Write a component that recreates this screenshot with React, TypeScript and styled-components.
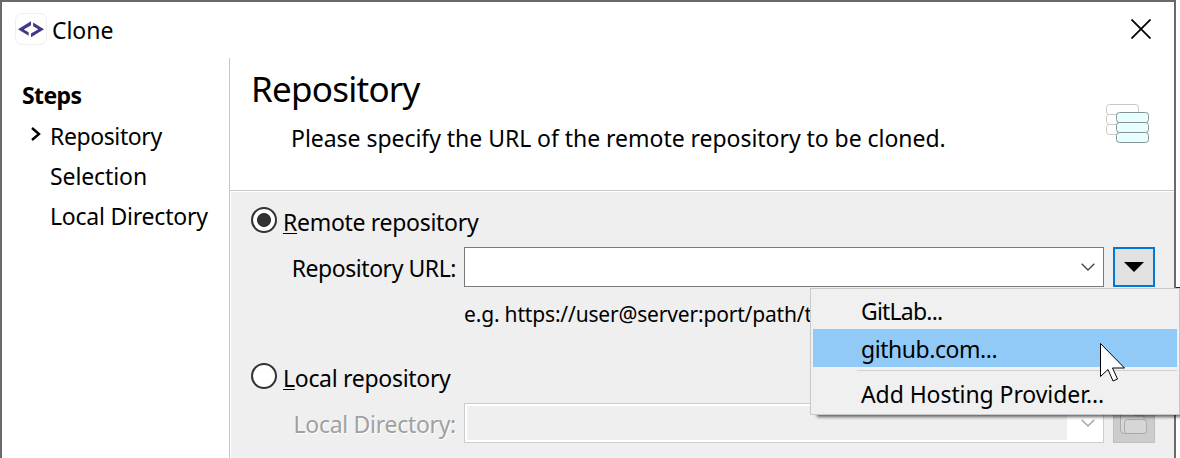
import React from "react";
import styled, { createGlobalStyle } from "styled-components";

const GlobalStyle = createGlobalStyle`
  *, *::before, *::after { box-sizing: border-box; }
  body {
    margin: 0;
    background: #fff;
    overflow: hidden;
    font-family: "Noto Sans", "Open Sans", sans-serif;
    color: #000;
  }
`;

const Screen = styled.div`
  width: 1180px;
  height: 458px;
  position: relative;
  overflow: hidden;
  display: flex;
`;

const Backdrop = styled.div`
  flex: 1;
  height: 288px;
  background: #fff;
  border-bottom: 1px solid #2b2410;
`;

const Dialog = styled.div`
  width: 1176px;
  height: 458px;
  flex: none;
  background: #fff;
  border: 2px solid #6a6a6a;
  border-bottom: 0;
  display: flex;
  flex-direction: column;
`;

const TitleBar = styled.div`
  height: 56px;
  flex: none;
  display: flex;
  align-items: center;
  padding: 0 23px 2px 13px;
`;

const AppIcon = styled.div`
  width: 32px;
  height: 32px;
  border: 1px solid #efefef;
  border-radius: 7px;
  display: flex;
  align-items: center;
  justify-content: center;
  svg { display: block; }
`;

const Text = styled.span<{ $size?: number; $ls?: number; $bold?: boolean; $line?: number }>`
  font-size: ${(p) => p.$size ?? 23}px;
  letter-spacing: ${(p) => p.$ls ?? -0.3}px;
  font-weight: ${(p) => (p.$bold ? 700 : 400)};
  line-height: ${(p) => p.$line ?? 32}px;
  white-space: pre;
`;

const Mnemonic = styled.span`
  text-decoration: underline;
  text-decoration-thickness: 1px;
  text-underline-offset: 2px;
`;

const DialogTitle = styled(Text)`
  margin: 1px auto 0 5px;
`;

const Body = styled.div`
  flex: 1;
  display: flex;
`;

const Sidebar = styled.div`
  width: 228px;
  border-right: 1px solid #c8c8c8;
  flex: none;
  padding: 18px 0 0 20px;
  display: flex;
  flex-direction: column;
`;

const Step = styled.div`
  height: 40px;
  padding-left: 28px;
  display: flex;
  align-items: center;
  &:first-child { padding: 0 0 2px; }
`;

const StepMarker = styled.svg`
  flex: none;
  margin: -4px 8px 0 -19px;
`;

const Main = styled.div`
  flex: 1;
  display: flex;
  flex-direction: column;
`;

const Header = styled.div`
  height: 133px;
  border-bottom: 1px solid #c8c8c8;
  display: flex;
  justify-content: space-between;
  padding: 7px 25px 0 21px;
`;

const Heading = styled.div`
  display: flex;
  flex-direction: column;
`;

const Description = styled(Text)`
  margin: 9px 0 0 40px;
`;

const HeaderIcon = styled.svg`
  margin-top: 39px;
`;

const Form = styled.div`
  flex: 1;
  background: #efefef;
  margin-top: 1px;
  margin-left: 1px;
  padding: 14px 19px 0 20px;
  display: flex;
  flex-direction: column;
`;

const RadioRow = styled.div`
  height: 32px;
  flex: none;
  display: flex;
  align-items: center;
  gap: 6px;
`;

const Radio = styled.span<{ $checked?: boolean }>`
  width: 26px;
  height: 26px;
  margin-top: -4px;
  border: 2px solid #333;
  border-radius: 50%;
  background: ${(p) => (p.$checked ? "radial-gradient(circle, #333 6.6px, #fff 7.3px)" : "#fff")};
`;

const FieldRow = styled.div`
  display: flex;
  flex: none;
  height: 40px;
  margin-top: 9px;
`;

const FieldLabel = styled(Text)<{ $disabled?: boolean }>`
  width: 205px;
  margin-right: 8px;
  padding-top: 5px;
  text-align: right;
  color: ${(p) => (p.$disabled ? "#a0a0a0" : "#000")};
  text-shadow: ${(p) => (p.$disabled ? "1px 1px 0 #fff" : "none")};
`;

const Combo = styled.div<{ $disabled?: boolean }>`
  width: 640px;
  border: 1px solid ${(p) => (p.$disabled ? "#cccccc" : "#7a7a7a")};
  background: #fff;
  padding: 2px;
  display: flex;
  justify-content: space-between;
  align-items: center;
`;

const ComboValue = styled.div<{ $disabled?: boolean }>`
  width: 600px;
  height: 34px;
  background: ${(p) => (p.$disabled ? "#efefef" : "#fff")};
`;

const Chevron = styled.svg`
  margin-right: 6px;
`;

const SideButton = styled.div<{ $disabled?: boolean }>`
  width: 42px;
  margin-left: 9px;
  border: ${(p) => (p.$disabled ? "1px solid #bfbfbf" : "2px solid #0078d7")};
  background: ${(p) => (p.$disabled ? "#cccccc" : "#e1e1e1")};
  display: flex;
  align-items: center;
  justify-content: center;
`;

const Hint = styled(Text)`
  flex: none;
  width: 346px;
  margin: 11px 0 32px 213px;
`;

const Menu = styled.div`
  position: absolute;
  left: 810px;
  top: 288px;
  width: 370px;
  height: 127px;
  border: 1px solid #c8c8c8;
  background: #f0f0f0;
  box-shadow: 5px 4px 3px -2px rgba(0, 0, 0, 0.6);
  padding: 2px;
  display: flex;
  flex-direction: column;
`;

const MenuItem = styled.div<{ $active?: boolean }>`
  height: 38px;
  flex: none;
  padding: 2px 0 0 48px;
  display: flex;
  align-items: center;
  background: ${(p) => (p.$active ? "#91c9f7" : "transparent")};
`;

const Separator = styled.div`
  height: 1px;
  flex: none;
  margin: 3px 0 3px 44px;
  background: #d2d2d2;
`;

const Cursor = styled.svg`
  position: absolute;
  left: 1099px;
  top: 342px;
`;

export default function App() {
  return (
    <Screen>
      <GlobalStyle />
      <Dialog>
        <TitleBar>
          <AppIcon>
            <svg width="26" height="17" viewBox="0 0 26 17">
              <path d="M0 8.2L13 0.3v4L5.8 8.4l4.8 2.8v3.6z" fill="#3e3a86" />
              <path d="M26 8.2L13 16.2v-3.8l7.3-4.1-5.2-3.1V1.6z" fill="#3e3a86" />
            </svg>
          </AppIcon>
          <DialogTitle $ls={-0.05}>Clone</DialogTitle>
          <svg width="20" height="20" viewBox="0 0 20 20">
            <path d="M0.5 0.5l19 19M19.5 0.5l-19 19" stroke="#000" strokeWidth="1.8" />
          </svg>
        </TitleBar>
        <Body>
          <Sidebar>
            <Step><Text $bold $ls={-0.6}>Steps</Text></Step>
            <Step>
              <StepMarker width="11" height="14" viewBox="0 0 11 14">
                <path d="M1 1l7 6-7 6" fill="none" stroke="#000" strokeWidth="2.4" />
              </StepMarker>
              <Text $ls={-0.4}>Repository</Text>
            </Step>
            <Step><Text $ls={-0.1}>Selection</Text></Step>
            <Step><Text $ls={-0.22}>Local Directory</Text></Step>
          </Sidebar>
          <Main>
            <Header>
              <Heading>
                <Text $size={35} $ls={-0.75} $line={48}>Repository</Text>
                <Description $ls={-0.04}>Please specify the URL of the remote repository to be cloned.</Description>
              </Heading>
              <HeaderIcon width="43" height="40" viewBox="0 0 43 40">
                <g fill="#fff" stroke="#c8c8c8">
                  <rect x="0.5" y="0.5" width="32" height="10" rx="3" />
                  <rect x="0.5" y="10.5" width="32" height="10" rx="3" />
                  <rect x="0.5" y="20.5" width="32" height="10" rx="3" />
                </g>
                <g fill="#e8ffff" stroke="#869292">
                  <rect x="10.5" y="8.5" width="32" height="10" rx="3" />
                  <rect x="10.5" y="18.5" width="32" height="10" rx="3" />
                  <rect x="10.5" y="28.5" width="32" height="10" rx="3" />
                </g>
              </HeaderIcon>
            </Header>
            <Form>
              <RadioRow>
                <Radio $checked />
                <Text><Mnemonic>R</Mnemonic>emote repository</Text>
              </RadioRow>
              <FieldRow>
                <FieldLabel $ls={-0.45}>Repository URL:</FieldLabel>
                <Combo>
                  <ComboValue />
                  <Chevron width="14" height="8" viewBox="0 0 14 8">
                    <path d="M0.7 0.7L7 7l6.3-6.3" fill="none" stroke="#444" strokeWidth="1.3" />
                  </Chevron>
                </Combo>
                <SideButton>
                  <svg width="20" height="10" viewBox="0 0 20 10"><path d="M0 0h20L10 10z" /></svg>
                </SideButton>
              </FieldRow>
              <Hint $size={21} $ls={-0.17}>e.g. https://user@server:port/path/t</Hint>
              <RadioRow>
                <Radio />
                <Text><Mnemonic>L</Mnemonic>ocal repository</Text>
              </RadioRow>
              <FieldRow>
                <FieldLabel $disabled>Local Directory:</FieldLabel>
                <Combo $disabled>
                  <ComboValue $disabled />
                  <Chevron width="14" height="8" viewBox="0 0 14 8">
                    <path d="M0.7 0.7L7 7l6.3-6.3" fill="none" stroke="#a0a0a0" strokeWidth="1.3" />
                  </Chevron>
                </Combo>
                <SideButton $disabled>
                  <svg width="28" height="24" viewBox="0 0 28 24" fill="#d6d6d6" stroke="#aaa">
                    <path d="M4 22.5Q0.5 22.5 0.5 19V4Q0.5 1 4 1H11l4 4h9V22.5z" />
                    <rect x="4.5" y="8.5" width="22" height="14" rx="3" />
                  </svg>
                </SideButton>
              </FieldRow>
            </Form>
          </Main>
        </Body>
      </Dialog>
      <Backdrop />
      <Menu>
        <MenuItem><Text $ls={-0.8}>GitLab...</Text></MenuItem>
        <MenuItem $active><Text $ls={-0.45}>github.com...</Text></MenuItem>
        <Separator />
        <MenuItem><Text $ls={-0.08}>Add Hosting Provider...</Text></MenuItem>
      </Menu>
      <Cursor width="28" height="40" viewBox="0 0 28 40">
        <path d="M1.5 1.5v33l7.5-7 5 11.5 4.5-2-5-11H25.5z" fill="#fff" stroke="#000" />
      </Cursor>
    </Screen>
  );
}
